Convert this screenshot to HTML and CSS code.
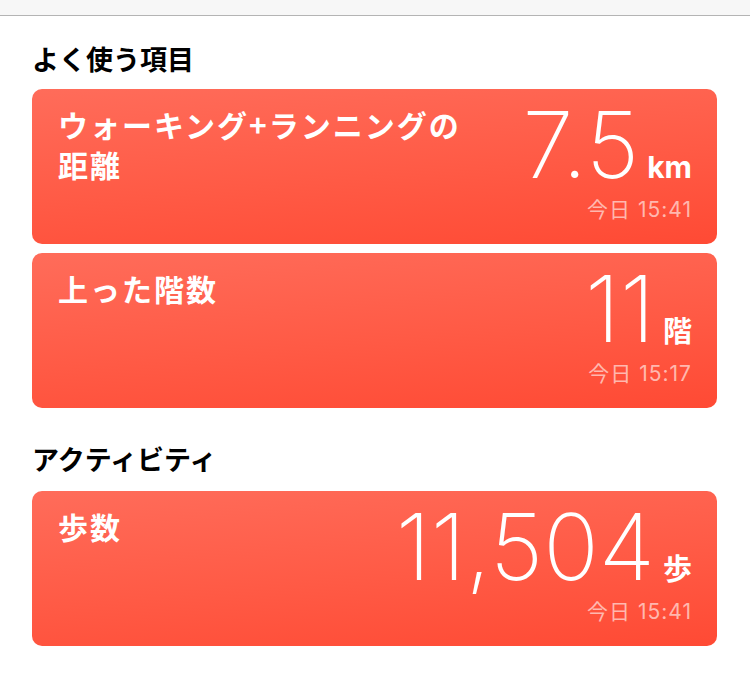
FILE: index.html
```html
<!DOCTYPE html>
<html lang="ja">
<head>
    <meta charset="UTF-8">
    <meta name="viewport" content="width=device-width, initial-scale=1.0">
    <title>ヘルスケア</title>
    <link rel="stylesheet" href="styles.css">
</head>
<body>
    <div class="topbar"></div>

    <div class="contenido">
        <h2 class="seccion seccion-primera">よく使う項目</h2>

        <div class="tarjeta">
            <div class="etiqueta">ウォーキング+ランニングの距離</div>
            <div class="dato">
                <div class="valor"><span class="numero">7.5</span><span class="unidad unidad-latina">km</span></div>
                <div class="hora">今日 15:41</div>
            </div>
        </div>

        <div class="tarjeta">
            <div class="etiqueta">上った階数</div>
            <div class="dato">
                <div class="valor"><span class="numero">11</span><span class="unidad">階</span></div>
                <div class="hora">今日 15:17</div>
            </div>
        </div>

        <h2 class="seccion">アクティビティ</h2>

        <div class="tarjeta">
            <div class="etiqueta">歩数</div>
            <div class="dato">
                <div class="valor"><span class="numero">11,504</span><span class="unidad">歩</span></div>
                <div class="hora">今日 15:41</div>
            </div>
        </div>
    </div>
</body>
</html>
```

FILE: styles.css
```css
body {
    font-family: "Noto Sans CJK JP", "Noto Sans", sans-serif;
    background-color: #ffffff;
    color: #000000;
    margin: 0;
    padding: 0;
}
.topbar {
    height: 15px;
    background-color: #f7f7f7;
    border-bottom: 1px solid #b4b4b4;
}
.contenido {
    padding: 0 33px 0 32px;
}
.seccion {
    font-size: 27px;
    font-weight: bold;
    line-height: 36px;
    margin: 33px 0 14px;
}
.seccion-primera {
    margin-top: 25px;
    margin-bottom: 12px;
}
.tarjeta {
    height: 155px;
    margin-bottom: 9px;
    padding: 0 25px 0 26px;
    box-sizing: border-box;
    display: flex;
    justify-content: space-between;
    background: linear-gradient(175deg, #ff6c5a 0%, #ff5a45 55%, #ff4a34 100%);
    border-radius: 10px;
    color: #ffffff;
}
.etiqueta {
    max-width: 420px;
    padding-top: 15px;
    font-size: 30px;
    font-weight: bold;
    line-height: 40px;
    letter-spacing: 2px;
}
.dato {
    display: flex;
    flex-direction: column;
    align-items: flex-end;
}
.valor {
    display: flex;
    align-items: baseline;
    margin-top: 10px;
    height: 92px;
}
.numero {
    font-family: "Inter", "Roboto", sans-serif;
    font-size: 92px;
    font-weight: 200;
    line-height: 92px;
}
.unidad {
    margin-left: 8px;
    font-size: 29px;
    font-weight: bold;
    line-height: 1;
}
.unidad-latina {
    font-family: "Inter", "Roboto", sans-serif;
    font-size: 30px;
}
.hora {
    margin-top: 7px;
    font-family: "Inter", "Noto Sans CJK JP", sans-serif;
    font-size: 21px;
    line-height: 24px;
    letter-spacing: 1px;
    color: rgba(255, 255, 255, 0.6);
}
```
